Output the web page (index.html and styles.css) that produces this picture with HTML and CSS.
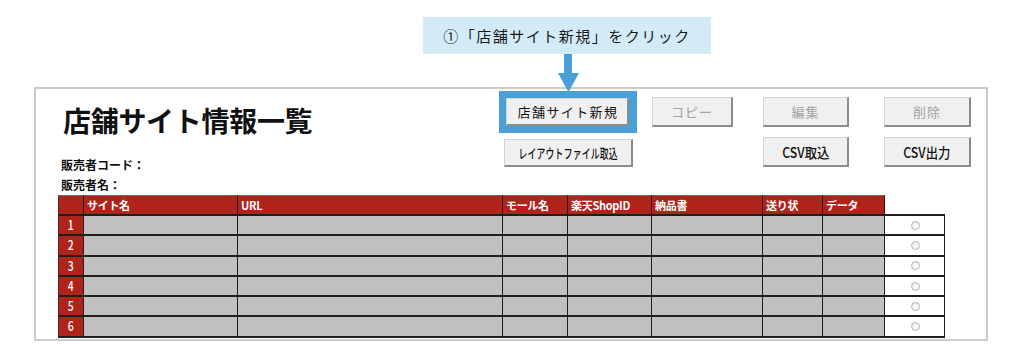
FILE: index.html
```html
<!DOCTYPE html>
<html lang="ja">
<head>
<meta charset="utf-8">
<title>店舗サイト情報一覧</title>
<link rel="stylesheet" href="styles.css">
</head>
<body>
<div class="page">
  <div class="callout">①「店舗サイト新規」をクリック</div>
  <svg class="arrow" width="26" height="40" viewBox="0 0 26 40" aria-hidden="true">
    <rect x="8" y="0" width="8" height="20" fill="#4a9fd4"/>
    <polygon points="2,19 23,19 12.5,38" fill="#4a9fd4"/>
  </svg>
  <div class="panel">
    <div class="head">
      <div class="intro">
        <h1 class="title">店舗サイト情報一覧</h1>
        <p class="meta">販売者コード：</p>
        <p class="meta">販売者名：</p>
      </div>
      <div class="actions">
        <div class="focus"><div class="btn btn-main">店舗サイト新規</div></div>
        <div class="btn btn-off w81">コピー</div>
        <div class="btn btn-off w86">編集</div>
        <div class="btn btn-off w87">削除</div>
        <div class="btn btn-layout"><span class="narrow">レイアウトファイル取込</span></div>
        <div class="spacer"></div>
        <div class="btn btn-csv w86"><span class="csv">CSV取込</span></div>
        <div class="btn btn-csv w87"><span class="csv">CSV出力</span></div>
      </div>
    </div>
    <div class="grid">
      <div class="hc first"></div>
      <div class="hc">サイト名</div>
      <div class="hc">URL</div>
      <div class="hc">モール名</div>
      <div class="hc">楽天ShopID</div>
      <div class="hc">納品書</div>
      <div class="hc">送り状</div>
      <div class="hc">データ</div>
      <div class="hc blank"></div>

      <div class="num"><span>1</span></div><div class="c"></div><div class="c"></div><div class="c"></div><div class="c"></div><div class="c"></div><div class="c"></div><div class="c"></div><div class="rc"><span class="radio"></span></div>
      <div class="num"><span>2</span></div><div class="c"></div><div class="c"></div><div class="c"></div><div class="c"></div><div class="c"></div><div class="c"></div><div class="c"></div><div class="rc"><span class="radio"></span></div>
      <div class="num"><span>3</span></div><div class="c"></div><div class="c"></div><div class="c"></div><div class="c"></div><div class="c"></div><div class="c"></div><div class="c"></div><div class="rc"><span class="radio"></span></div>
      <div class="num"><span>4</span></div><div class="c"></div><div class="c"></div><div class="c"></div><div class="c"></div><div class="c"></div><div class="c"></div><div class="c"></div><div class="rc"><span class="radio"></span></div>
      <div class="num"><span>5</span></div><div class="c"></div><div class="c"></div><div class="c"></div><div class="c"></div><div class="c"></div><div class="c"></div><div class="c"></div><div class="rc"><span class="radio"></span></div>
      <div class="num"><span>6</span></div><div class="c"></div><div class="c"></div><div class="c"></div><div class="c"></div><div class="c"></div><div class="c"></div><div class="c"></div><div class="rc"><span class="radio"></span></div>
    </div>
  </div>
</div>
</body>
</html>
```
FILE: styles.css
```css
* { box-sizing: border-box; }
html, body { margin: 0; padding: 0; background: #fff; }
body {
  font-family: "Noto Sans CJK JP", "Noto Sans", sans-serif;
  color: #111;
  width: 1024px;
  height: 360px;
  overflow: hidden;
}
.page { position: relative; padding-top: 17px; }

.callout {
  margin-left: 423px;
  width: 288px;
  height: 37px;
  background: #d2ebf7;
  display: flex;
  align-items: center;
  justify-content: center;
  font-size: 15px;
  letter-spacing: 1.5px;
  color: #1a1a1a;
}
.arrow { position: absolute; left: 556px; top: 54px; z-index: 2; }

.panel {
  margin-top: 33px;
  margin-left: 34px;
  width: 954px;
  border: 2px solid #cbcbcb;
  padding-left: 22px;
  padding-bottom: 1px;
}
.head { display: flex; height: 106px; }
.intro { width: 441px; }
.title {
  margin: 17px 0 0 5px;
  font-size: 28px;
  line-height: 28px;
  font-weight: 700;
  letter-spacing: -0.3px;
  color: #111;
}
.title + .meta { margin-top: 21px; }
.meta {
  margin: 0 0 0 3px;
  font-size: 12px;
  line-height: 20px;
  font-weight: 700;
}

.actions {
  margin-top: 2px;
  display: grid;
  grid-template-columns: 138px 96px 116px 122px;
  grid-template-rows: 42px 30px;
  row-gap: 4px;
}
.btn {
  display: flex;
  align-items: center;
  justify-content: center;
  background: #f0f0f0;
  border: 1px solid #d4d4d4;
  border-right: 2px solid #8c8c8c;
  border-bottom: 2px solid #8c8c8c;
  font-size: 13px;
  color: #111;
  white-space: nowrap;
  height: 30px;
  align-self: center;
  justify-self: end;
}
.focus {
  border: 7px solid #4a9fd4;
  border-right-width: 8px;
  height: 42px;
}
.btn-main { width: 100%; height: 100%; letter-spacing: 1.4px; padding-left: 2px; }
.btn-off { color: #a3a3a3; letter-spacing: 1px; }
.w81 { width: 81px; }
.w86 { width: 86px; }
.w87 { width: 87px; }
.btn-layout {
  justify-self: start;
  align-self: start;
  margin: 2px 0 0 5px;
  width: 129px;
  height: 28px;
}
.narrow {
  display: inline-block;
  font-size: 13px;
  font-weight: 500;
  transform: scaleX(0.68);
  letter-spacing: 0.3px;
}
.csv {
  display: inline-block;
  font-size: 14px;
  font-weight: 500;
  transform: scaleX(0.88);
}

.grid {
  display: grid;
  grid-template-columns: 26px 154px 265px 65px 84px 111px 60px 62px 60px;
  grid-template-rows: 21px repeat(6, 20.3px);
}
.hc {
  background: #b0231b;
  color: #fff;
  font-size: 11px;
  font-weight: 700;
  line-height: 18px;
  padding-left: 3px;
  border-top: 1px solid #6b6b6b;
  border-right: 1px solid #2a1212;
  border-bottom: 2px solid #1e1e1e;
  letter-spacing: -0.3px;
}
.hc.first { border-left: 1px solid #5a2a2a; }
.hc.blank { background: #fff; border-top: none; border-right: none; }
.num {
  background: #b0231b;
  color: #fff;
  font-size: 13px;
  font-weight: 500;
  text-align: center;
  line-height: 18px;
  border-left: 1px solid #5a2a2a;
  border-right: 1px solid #1e1e1e;
  border-bottom: 2px solid #1e1e1e;
}
.num span { display: inline-block; transform: scaleX(0.8); }
.c {
  background: #c0c0c0;
  border-right: 1px solid #1e1e1e;
  border-bottom: 2px solid #1e1e1e;
}
.rc {
  background: #fff;
  border-right: 1px solid #1e1e1e;
  border-bottom: 2px solid #1e1e1e;
  display: flex;
  align-items: center;
  justify-content: center;
  padding-left: 1px;
}
.radio {
  width: 9px;
  height: 9px;
  border-radius: 50%;
  border: 1px solid #b5b5b5;
  background: radial-gradient(circle at 60% 60%, #ffffff 0%, #ececec 70%, #dcdcdc 100%);
}
```
